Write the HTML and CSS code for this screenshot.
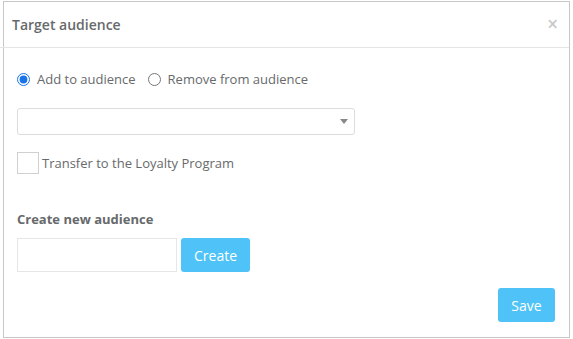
FILE: index.html
```html
<!DOCTYPE html>
<html lang="en">
<head>
    <meta charset="UTF-8">
    <title>Target audience</title>
    <link rel="stylesheet" href="styles.css">
</head>
<body>
    <div class="modal">
        <div class="modal-header">
            <h4 class="modal-title">Target audience</h4>
            <span class="close">&times;</span>
        </div>
        <div class="modal-body">
            <div class="radio-row">
                <label class="radio"><input type="radio" name="mode" checked> Add to audience</label>
                <label class="radio"><input type="radio" name="mode"> Remove from audience</label>
            </div>
            <div class="select">
                <span class="caret"></span>
            </div>
            <label class="check">
                <span class="box"></span>
                Transfer to the Loyalty Program
            </label>
            <h5 class="section-title">Create new audience</h5>
            <div class="create-row">
                <input type="text" class="field">
                <button class="btn">Create</button>
            </div>
        </div>
        <div class="modal-footer">
            <button class="btn">Save</button>
        </div>
    </div>
</body>
</html>
```

FILE: styles.css
```css
body {
    margin: 0;
    font-family: "Open Sans", sans-serif;
    color: #676a6c;
    background: #fff;
}
.modal {
    margin: 1px 3px 0 3px;
    width: 565px;
    height: 335px;
    border: 1px solid #c8c8c8;
    display: flex;
    flex-direction: column;
}
.modal-header {
    display: flex;
    align-items: center;
    justify-content: space-between;
    height: 45px;
    padding: 0 11px 0 12px;
    border-bottom: 1px solid #e5e5e5;
    margin-left: -4px;
}
.modal-title {
    margin: 0;
    font-size: 14px;
    font-weight: 600;
    color: #676a6c;
}
.close {
    font-size: 19px;
    color: #c9c9c9;
    font-weight: 600;
    line-height: 1;
}
.modal-body {
    padding: 21px 13px 0 13px;
    flex: 1;
}
.radio-row {
    display: flex;
    gap: 12px;
    font-size: 13px;
    height: 20px;
    align-items: center;
}
.radio {
    display: flex;
    align-items: center;
}
.radio input {
    margin: 0 7px 0 0;
    width: 13px;
    height: 13px;
    accent-color: #1a73e8;
}
.select {
    margin-top: 19px;
    width: 336px;
    height: 25px;
    border: 1px solid #dcdcdc;
    border-radius: 3px;
    position: relative;
}
.caret {
    position: absolute;
    right: 6px;
    top: 10px;
    border-left: 4px solid transparent;
    border-right: 4px solid transparent;
    border-top: 5px solid #888;
}
.check {
    display: flex;
    align-items: center;
    margin-top: 17px;
    font-size: 13px;
}
.box {
    width: 20px;
    height: 20px;
    border: 1px solid #d0d0d0;
    margin-right: 3px;
}
.section-title {
    margin: 36px 0 0;
    font-size: 13px;
    font-weight: 700;
}
.create-row {
    display: flex;
    gap: 4px;
    margin-top: 10px;
}
.field {
    width: 160px;
    height: 34px;
    box-sizing: border-box;
    border: 1px solid #e5e6e7;
    margin: 0;
    padding: 0;
}
.btn {
    background: #4fc3f7;
    color: #fff;
    border: none;
    border-radius: 3px;
    font-family: "Open Sans", sans-serif;
    font-size: 14px;
    height: 34px;
    padding: 0 13px;
}
.modal-footer {
    display: flex;
    justify-content: flex-end;
    padding: 0 14px 15px 0;
}
.modal-footer .btn {
    width: 57px;
    padding: 0;
}
```
